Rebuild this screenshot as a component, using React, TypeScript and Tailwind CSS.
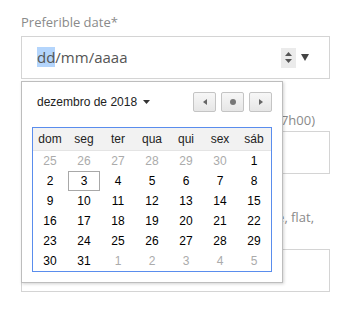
import React from "react";

const weeks: [number, boolean][][] = [
  [[25, true], [26, true], [27, true], [28, true], [29, true], [30, true], [1, false]],
  [[2, false], [3, false], [4, false], [5, false], [6, false], [7, false], [8, false]],
  [[9, false], [10, false], [11, false], [12, false], [13, false], [14, false], [15, false]],
  [[16, false], [17, false], [18, false], [19, false], [20, false], [21, false], [22, false]],
  [[23, false], [24, false], [25, false], [26, false], [27, false], [28, false], [29, false]],
  [[30, false], [31, false], [1, true], [2, true], [3, true], [4, true], [5, true]],
];

const days = ["dom", "seg", "ter", "qua", "qui", "sex", "sáb"];

function NavButton({ children }: { children: React.ReactNode }) {
  return (
    <div className="w-[23px] h-[20px] flex items-center justify-center rounded-[2px] border border-[#c4c4c4] bg-gradient-to-b from-[#f7f7f7] to-[#e6e6e6]">
      {children}
    </div>
  );
}

export default function App() {
  return (
    <div className="w-[345px] h-[310px] bg-white overflow-hidden font-['Open_Sans',sans-serif]">
      <div className="pl-[21px] pr-[15px] pt-[13px]">
        <div className="text-[13px] leading-[18px] text-[#8a8a8a] mb-[5px]">Preferible date*</div>
        <div className="relative">
          <div className="h-[43px] border border-[#d4d4d4] flex items-center pl-[15px] pr-[20px]">
            <div className="text-[15px] text-[#555] leading-[19px] flex-1">
              <span className="bg-[#b4d5fc]">dd</span>/mm/aaaa
            </div>
            <div className="w-[15px] h-[20px] bg-[#ebebeb] flex flex-col items-center justify-center gap-[3px]">
              <svg width="7" height="4" viewBox="0 0 7 4"><path d="M3.5 0L7 4H0z" fill="#555" /></svg>
              <svg width="7" height="4" viewBox="0 0 7 4"><path d="M0 0h7L3.5 4z" fill="#555" /></svg>
            </div>
            <svg className="ml-[5px]" width="8" height="7" viewBox="0 0 8 7"><path d="M0 0h8L4 7z" fill="#444" /></svg>
          </div>

          <div className="absolute left-0 top-[calc(100%+2px)] z-10 w-[262px] bg-white border border-[#bdbdbd] shadow-[1px_1px_3px_rgba(0,0,0,0.18)] p-[10px] font-['Liberation_Sans',Arial,sans-serif]">
            <div className="flex items-center h-[20px] mb-[15px]">
              <div className="flex items-center gap-[6px] pl-[5px] text-[12px] text-[#222] flex-1">
                <span>dezembro de 2018</span>
                <svg width="7" height="4" viewBox="0 0 7 4"><path d="M0 0h7L3.5 4z" fill="#333" /></svg>
              </div>
              <div className="flex gap-[5px]">
                <NavButton>
                  <svg width="4" height="6" viewBox="0 0 4 6"><path d="M4 0v6L0 3z" fill="#666" /></svg>
                </NavButton>
                <NavButton>
                  <div className="w-[6px] h-[6px] rounded-full bg-[#777]" />
                </NavButton>
                <NavButton>
                  <svg width="4" height="6" viewBox="0 0 4 6"><path d="M0 0v6L4 3z" fill="#666" /></svg>
                </NavButton>
              </div>
            </div>
            <div className="border border-[#5a8ded] w-[240px]">
              <div className="grid grid-cols-7 h-[23px] bg-[#f2f2f2] border-b border-[#e4e4e4] text-[12px] text-[#222]">
                {days.map((d) => (
                  <div key={d} className="flex items-center justify-center">{d}</div>
                ))}
              </div>
              {weeks.map((w, i) => (
                <div key={i} className="grid grid-cols-7 h-[20px] text-[12px]">
                  {w.map(([n, gray], j) => (
                    <div key={j} className="flex items-center justify-center">
                      <div
                        className={
                          i === 1 && j === 1
                            ? "w-[32px] h-[20px] border border-[#a8a8a8] flex items-center justify-center text-black"
                            : gray
                            ? "text-[#ababab]"
                            : "text-black"
                        }
                      >
                        {n}
                      </div>
                    </div>
                  ))}
                </div>
              ))}
            </div>
          </div>
        </div>

        <div className="mt-[32px] mb-[2px] w-[294px] text-right text-[13px] leading-[18px] text-[#8a8a8a] whitespace-nowrap overflow-hidden">
          Preferible time (9h00 – 17h00)
        </div>
        <div className="h-[43px] border border-[#d4d4d4]" />

        <div className="mt-[34px] mb-[5px] text-[13px] leading-[18px] text-[#8a8a8a]">
          <div className="w-[293px] text-right whitespace-nowrap overflow-hidden">Type of property (house, flat,</div>
          <div>office)</div>
        </div>
        <div className="h-[43px] border border-[#d4d4d4]" />
      </div>
    </div>
  );
}
